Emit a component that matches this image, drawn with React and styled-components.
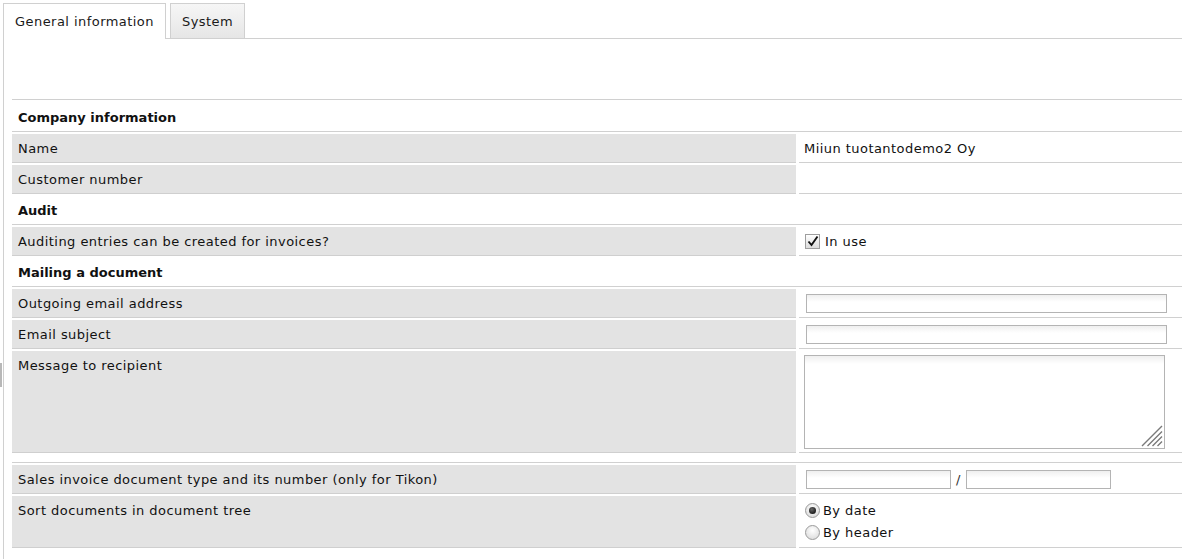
import React from "react";
import styled, { createGlobalStyle } from "styled-components";

const GlobalStyle = createGlobalStyle`
  html, body {
    margin: 0;
    padding: 0;
    background: #ffffff;
    overflow: hidden;
  }
  body {
    font-family: "DejaVu Sans", Verdana, sans-serif;
    font-size: 13px;
    letter-spacing: 0.45px;
    color: #111111;
  }
`;

const Page = styled.div`
  position: relative;
  width: 1182px;
  height: 559px;
  padding-left: 3px;
  box-sizing: border-box;
`;

const TabStrip = styled.div`
  display: flex;
  align-items: flex-end;
  gap: 4px;
  height: 39px;
  padding-top: 3px;
  box-sizing: border-box;
  border-bottom: 1px solid #d0d0d0;
`;

const Tab = styled.div`
  box-sizing: border-box;
  padding: 0 11px;
  display: flex;
  align-items: center;
  border: 1px solid #d0d0d0;
  border-bottom: none;
  margin-bottom: ${(p) => (p.active ? "-1px" : "0")};
  height: ${(p) => (p.active ? "36px" : "35px")};
  padding-bottom: ${(p) => (p.active ? "1px" : "0")};
  background: ${(p) =>
    p.active ? "#ffffff" : "linear-gradient(#f6f6f6, #e6e6e6)"};
  color: #1a1a1a;
  white-space: nowrap;
`;

const Panel = styled.div`
  border-left: 1px solid #d0d0d0;
  height: 520px;
  padding-left: 8px;
`;

const Toolbar = styled.div`
  height: 60px;
`;

const Form = styled.div`
  display: flex;
  flex-direction: column;
  gap: 2px;
  padding-top: 3px;
  border-top: 1px solid #d0d0d0;
  width: 1190px;
`;

const SectionHeader = styled.div`
  height: 28px;
  padding: 0 6px;
  display: flex;
  align-items: center;
  font-weight: bold;
  letter-spacing: 0;
  border-bottom: 1px solid #d0d0d0;
`;

const Row = styled.div`
  display: grid;
  grid-template-columns: 784px 1fr;
  column-gap: 3px;
  height: ${(p) => p.h || 29}px;
`;

const Label = styled.div`
  background: #e3e3e3;
  border-bottom: 1px solid #cfcfcf;
  padding: 6px 6px 0;
  line-height: 17px;
`;

const Value = styled.div`
  border-bottom: 1px solid #d0d0d0;
  padding: ${(p) => p.pad || "0 5px"};
  line-height: 17px;
  display: flex;
  align-items: ${(p) => (p.column ? "flex-start" : "center")};
  flex-direction: ${(p) => (p.column ? "column" : "row")};
  & > * {
    flex-shrink: 0;
  }
`;

const Separator = styled.div`
  height: 7px;
  border-bottom: 1px solid #d0d0d0;
`;

const TextInput = styled.input`
  width: ${(p) => p.w}px;
  height: 19px;
  box-sizing: border-box;
  border: 1px solid #b4b4b4;
  background: linear-gradient(#efefef, #ffffff 7px);
  padding: 0 3px;
  font: inherit;
  outline: none;
  margin: 0;
`;

const AreaWrap = styled.div`
  position: relative;
  width: 361px;
  height: 94px;
`;

const TextArea = styled.textarea`
  width: 100%;
  height: 100%;
  box-sizing: border-box;
  border: 1px solid #b4b4b4;
  background: linear-gradient(#efefef, #ffffff 8px);
  resize: none;
  font: inherit;
  outline: none;
  margin: 0;
  display: block;
`;

const Grip = styled.svg`
  position: absolute;
  right: 2px;
  bottom: 2px;
`;

const Slash = styled.span`
  width: 15px;
  text-align: center;
  color: #333;
`;

const Choice = styled.label`
  display: flex;
  align-items: center;
  height: 22px;
`;

const CheckBox = styled.span`
  width: 15px;
  height: 15px;
  box-sizing: border-box;
  border: 1px solid #9e9e9e;
  background: linear-gradient(#ffffff, #dcdcdc);
  display: inline-flex;
  align-items: center;
  justify-content: center;
  margin: 0 5px 0 1px;
`;

const Radio = styled.span`
  width: 15px;
  height: 15px;
  box-sizing: border-box;
  border-radius: 50%;
  border: 1px solid #9a9a9a;
  background: radial-gradient(circle at 50% 35%, #ffffff, #d6d6d6);
  display: inline-flex;
  align-items: center;
  justify-content: center;
  margin-right: 3px;
  &::after {
    content: "";
    width: 7px;
    height: 7px;
    border-radius: 50%;
    background: ${(p) =>
      p.checked ? "radial-gradient(circle at 40% 35%, #666, #000)" : "transparent"};
  }
`;

const Handle = styled.div`
  position: absolute;
  left: 0;
  top: 363px;
  width: 2px;
  height: 24px;
  background: #b8b8b8;
`;

export default function App() {
  return (
    <Page>
      <GlobalStyle />
      <TabStrip>
        <Tab active>General information</Tab>
        <Tab>System</Tab>
      </TabStrip>
      <Panel>
        <Toolbar />
        <Form>
          <SectionHeader>Company information</SectionHeader>
          <Row>
            <Label>Name</Label>
            <Value>Miiun tuotantodemo2 Oy</Value>
          </Row>
          <Row>
            <Label>Customer number</Label>
            <Value />
          </Row>
          <SectionHeader>Audit</SectionHeader>
          <Row>
            <Label>Auditing entries can be created for invoices?</Label>
            <Value pad="0 5px">
              <Choice>
                <CheckBox>
                  <svg width="12" height="12" viewBox="0 0 12 12">
                    <path d="M1.5 6.5 L4.5 10 L10.5 1.5" fill="none" stroke="#111" strokeWidth="1.9" />
                  </svg>
                </CheckBox>
                In use
              </Choice>
            </Value>
          </Row>
          <SectionHeader>Mailing a document</SectionHeader>
          <Row>
            <Label>Outgoing email address</Label>
            <Value pad="0 7px">
              <TextInput w={361} />
            </Value>
          </Row>
          <Row>
            <Label>Email subject</Label>
            <Value pad="0 7px">
              <TextInput w={361} />
            </Value>
          </Row>
          <Row h={102}>
            <Label>Message to recipient</Label>
            <Value column pad="4px 5px 0">
              <AreaWrap>
                <TextArea />
                <Grip width="22" height="22" viewBox="0 0 22 22">
                  <path
                    d="M21 1 L1 21 M21 6.5 L6.5 21 M21 11.5 L11.5 21 M21 16.5 L16.5 21"
                    stroke="#7a7a7a"
                    strokeWidth="1.4"
                  />
                </Grip>
              </AreaWrap>
            </Value>
          </Row>
          <Separator />
          <Row>
            <Label>Sales invoice document type and its number (only for Tikon)</Label>
            <Value pad="0 7px">
              <TextInput w={145} />
              <Slash>/</Slash>
              <TextInput w={145} />
            </Value>
          </Row>
          <Row h={52}>
            <Label>Sort documents in document tree</Label>
            <Value column pad="3px 6px 0">
              <Choice>
                <Radio checked />
                By date
              </Choice>
              <Choice>
                <Radio />
                By header
              </Choice>
            </Value>
          </Row>
        </Form>
      </Panel>
      <Handle />
    </Page>
  );
}
